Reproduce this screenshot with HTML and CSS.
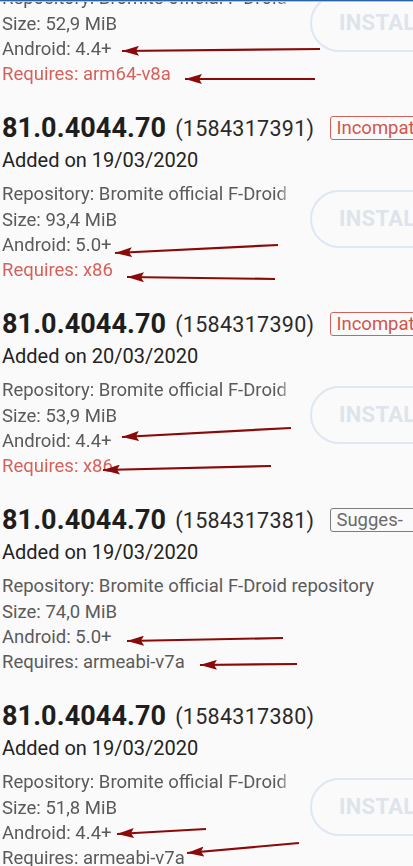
FILE: index.html
```html
<!DOCTYPE html>
<html lang="en">
<head>
<meta charset="utf-8">
<title>Versions</title>
<link rel="stylesheet" href="styles.css">
</head>
<body>
<div class="topbar"></div>
<main class="list">
  <section class="release partial">
    <div class="body">
      <div class="details clip">
        <p class="repo">Repository: Bromite official F-Droid repository</p>
        <p>Size: 52,9 MiB</p>
        <p>Android: 4.4+</p>
        <p class="bad">Requires: arm64-v8a</p>
      </div>
      <button class="install">INSTALL</button>
    </div>
  </section>

  <section class="release">
    <div class="title"><span class="ver">81.0.4044.70</span><span class="code">(1584317391)</span><span class="badge red">Incompatible</span></div>
    <p class="added">Added on 19/03/2020</p>
    <div class="body">
      <div class="details clip">
        <p class="repo">Repository: Bromite official F-Droid repository</p>
        <p>Size: 93,4 MiB</p>
        <p>Android: 5.0+</p>
        <p class="bad">Requires: x86</p>
      </div>
      <button class="install">INSTALL</button>
    </div>
  </section>

  <section class="release">
    <div class="title"><span class="ver">81.0.4044.70</span><span class="code">(1584317390)</span><span class="badge red">Incompatible</span></div>
    <p class="added">Added on 20/03/2020</p>
    <div class="body">
      <div class="details clip">
        <p class="repo">Repository: Bromite official F-Droid repository</p>
        <p>Size: 53,9 MiB</p>
        <p>Android: 4.4+</p>
        <p class="bad">Requires: x86</p>
      </div>
      <button class="install">INSTALL</button>
    </div>
  </section>

  <section class="release">
    <div class="title"><span class="ver">81.0.4044.70</span><span class="code">(1584317381)</span><span class="badge grey">Sugges-</span></div>
    <p class="added">Added on 19/03/2020</p>
    <div class="body">
      <div class="details">
        <p class="repo">Repository: Bromite official F-Droid repository</p>
        <p>Size: 74,0 MiB</p>
        <p>Android: 5.0+</p>
        <p>Requires: armeabi-v7a</p>
      </div>
    </div>
  </section>

  <section class="release">
    <div class="title"><span class="ver">81.0.4044.70</span><span class="code">(1584317380)</span></div>
    <p class="added">Added on 19/03/2020</p>
    <div class="body">
      <div class="details clip">
        <p class="repo">Repository: Bromite official F-Droid repository</p>
        <p>Size: 51,8 MiB</p>
        <p>Android: 4.4+</p>
        <p>Requires: armeabi-v7a</p>
      </div>
      <button class="install">INSTALL</button>
    </div>
  </section>
</main>

<svg class="arrows" width="413" height="866" viewBox="0 0 413 866" aria-hidden="true">
  <defs>
    <marker id="head" markerUnits="userSpaceOnUse" markerWidth="18" markerHeight="10" refX="17" refY="5" orient="auto">
      <path d="M0,0 L17,5 L0,10 L3,5 Z" fill="#8a0a0a"/>
    </marker>
  </defs>
  <g stroke="#8a0a0a" stroke-width="2.2" fill="none" marker-end="url(#head)">
    <line x1="320" y1="49" x2="122" y2="51"/>
    <line x1="315" y1="79" x2="185" y2="79"/>
    <line x1="278" y1="245" x2="115" y2="253"/>
    <line x1="275" y1="279" x2="127" y2="277"/>
    <line x1="291" y1="428" x2="122" y2="437"/>
    <line x1="271" y1="466" x2="103" y2="470"/>
    <line x1="283" y1="638" x2="127" y2="641"/>
    <line x1="297" y1="664" x2="200" y2="665"/>
    <line x1="206" y1="829" x2="117" y2="834"/>
    <line x1="299" y1="843" x2="187" y2="853"/>
  </g>
</svg>
</body>
</html>
```

FILE: styles.css
```css
html, body {
  margin: 0;
  padding: 0;
  width: 413px;
  height: 866px;
  overflow: hidden;
  background: #fafafa;
}

body {
  position: relative;
  font-family: Roboto, "Noto Sans", "Liberation Sans", sans-serif;
  color: #222;
}

.topbar {
  position: absolute;
  top: 0;
  left: 0;
  width: 413px;
  height: 1px;
  background: #2c63a8;
  border-bottom: 1px solid #a9c3e2;
  z-index: 2;
}

.list {
  width: 480px;
  padding-left: 2px;
}

.release {
  padding-bottom: 24.45px;
}

.release.partial {
  margin-top: -13.65px;
}

.release.partial .body {
  margin-top: 0;
}

p {
  margin: 0;
}

.title {
  display: flex;
  align-items: center;
  height: 32px;
  white-space: nowrap;
}

.ver {
  font-size: 27px;
  font-weight: 700;
  line-height: 32px;
  color: #1e1e1e;
  letter-spacing: 0.1px;
}

.code {
  font-size: 21.5px;
  line-height: 32px;
  color: #2a2a2a;
  margin-left: 9px;
  letter-spacing: 0.3px;
  position: relative;
  top: 1px;
}

.badge {
  margin-left: 16px;
  font-size: 18.5px;
  line-height: 20px;
  padding: 1px 5px;
  border: 1.5px solid;
  border-radius: 3px;
  min-width: 100px;
}

.badge.red {
  color: #d3554d;
  border-color: #d0625b;
}

.badge.grey {
  color: #6a6a6a;
  border-color: #7c7c7c;
}

.added {
  margin-top: 4px;
  font-size: 20px;
  line-height: 24px;
  color: #232323;
}

.body {
  display: flex;
  align-items: flex-start;
  margin-top: 10.35px;
}

.details {
  font-size: 18.5px;
  line-height: 25.3px;
  color: #5a5a5a;
  white-space: nowrap;
}

.details.clip {
  flex: 0 0 290px;
  width: 290px;
  overflow: hidden;
  -webkit-mask-image: linear-gradient(to right, #000 276px, rgba(0,0,0,0.15) 290px);
  mask-image: linear-gradient(to right, #000 276px, rgba(0,0,0,0.15) 290px);
}

.details .bad {
  color: #d6615a;
}

.install {
  flex: 0 0 auto;
  margin-left: 18px;
  margin-top: 7.5px;
  height: 58px;
  padding: 0 27px;
  border: 2px solid #dfe7f1;
  border-radius: 29px;
  background: transparent;
  font-family: Roboto, "Noto Sans", "Liberation Sans", sans-serif;
  font-size: 22px;
  font-weight: 700;
  letter-spacing: 0.3px;
  color: #dde4ec;
}

.arrows {
  position: absolute;
  top: 0;
  left: 0;
  pointer-events: none;
  z-index: 3;
}
```
